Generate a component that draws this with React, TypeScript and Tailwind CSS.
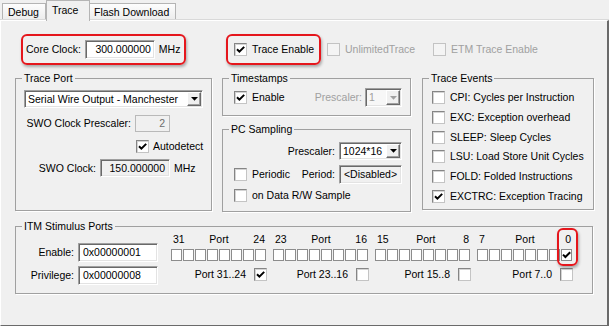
import React from 'react'

const sunken =
  'border border-[#a0a0a0] border-r-white border-b-white shadow-[inset_1px_1px_0_#696969,inset_-1px_-1px_0_#e3e3e3]'
const redBox = 'border-2 border-[#e5161c] rounded-[6px] shadow-[1px_2px_3px_rgba(0,0,0,0.3)]'

function Check({ checked = false, disabled = false }: { checked?: boolean; disabled?: boolean }) {
  return (
    <span
      className={
        disabled
          ? 'flex w-[13px] h-[13px] shrink-0 items-center justify-center border border-[#c3c3c3] bg-[#f4f4f4]'
          : 'flex w-[13px] h-[13px] shrink-0 items-center justify-center border border-[#858585] border-r-[#c4c4c4] border-b-[#c4c4c4] bg-white shadow-[inset_1px_1px_0_#d4d4d4]'
      }
    >
      {checked && (
        <svg width="9" height="9" viewBox="0 0 9 9">
          <path d="M1 4.3 L3.4 6.7 L8.2 1.9" fill="none" stroke="#000" strokeWidth="2" />
        </svg>
      )}
    </span>
  )
}

function Arrow({ gray = false }: { gray?: boolean }) {
  return (
    <svg width="7" height="4" viewBox="0 0 7 4">
      <polygon points="0,0 7,0 3.5,3.8" fill={gray ? '#a0a0a0' : '#000'} />
    </svg>
  )
}

function Combo({ value, className, disabled = false }: { value: string; className: string; disabled?: boolean }) {
  return (
    <div className={`flex ${sunken} ${disabled ? 'bg-[#f7f7f7] text-[#a0a0a0]' : 'bg-white'} ${className}`}>
      <span className="flex-1 flex items-center pl-[3px] whitespace-nowrap overflow-hidden">{value}</span>
      <span className="my-[1px] mr-[1px] w-[14px] flex items-center justify-center bg-[#f0f0f0] border border-white border-r-[#696969] border-b-[#696969] shadow-[inset_-1px_-1px_0_#a0a0a0]">
        <Arrow gray={disabled} />
      </span>
    </div>
  )
}

function Group({ title, className, children }: { title: string; className: string; children?: React.ReactNode }) {
  return (
    <fieldset className={`min-w-0 border border-[#a0a0a0] shadow-[1px_1px_0_#fff] ${className}`}>
      <legend className="ml-[6px] px-[2px] leading-[14px]">{title}</legend>
      {children}
    </fieldset>
  )
}

const events = [
  ['CPI: Cycles per Instruction', false],
  ['EXC: Exception overhead', false],
  ['SLEEP: Sleep Cycles', false],
  ['LSU: Load Store Unit Cycles', false],
  ['FOLD: Folded Instructions', false],
  ['EXCTRC: Exception Tracing', true],
] as const

const ports = [
  { hi: '31', lo: '24', label: 'Port 31..24', on: true },
  { hi: '23', lo: '16', label: 'Port 23..16', on: false },
  { hi: '15', lo: '8', label: 'Port 15..8', on: false },
  { hi: '7', lo: '0', label: 'Port 7..0', on: false },
]

export default function App() {
  return (
    <div className="w-[609px] h-[326px] bg-[#f0f0f0] flex flex-col overflow-hidden font-['Liberation_Sans',sans-serif] text-[10.5px] leading-[13px] text-black">
      {/* tabs */}
      <div className="h-[20px] shrink-0 flex items-end pl-[2px]">
        <div className="w-[44px] h-[17px] border border-b-0 border-[#b4b4b4] bg-gradient-to-b from-[#fdfdfd] to-[#ececec] pl-[5px] pt-[2px]">Debug</div>
        <div className="relative z-10 -mb-px w-[44px] h-[21px] border border-b-0 border-[#b4b4b4] bg-[#f0f0f0] pl-[5px] pt-[3px]">Trace</div>
        <div className="w-[86px] h-[17px] border border-b-0 border-l-0 border-[#b4b4b4] bg-gradient-to-b from-[#fdfdfd] to-[#ececec] pl-[4px] pt-[2px]">Flash Download</div>
      </div>

      {/* page */}
      <div className="flex-1 flex flex-col border-t border-l border-r-2 border-b border-white border-r-[#6a6a6a] border-b-[#6a6a6a] shadow-[0_-1px_0_#d9d9d9]">
        {/* top row */}
        <div className="mt-[13px] h-[31px] flex items-center">
          <div className={`ml-[20px] w-[165px] h-[31px] flex items-center pl-[3px] ${redBox}`}>
            <span>Core Clock:</span>
            <div className={`ml-[4px] w-[70px] h-[19px] flex items-center justify-end pr-[3px] bg-white ${sunken}`}>300.000000</div>
            <span className="ml-[4px]">MHz</span>
          </div>
          <div className={`ml-[40px] w-[95px] h-[31px] flex items-center gap-[5px] pl-[6px] ${redBox}`}>
            <Check checked />
            <span>Trace Enable</span>
          </div>
          <div className="ml-[6px] w-[106px] flex items-center gap-[5px] text-[#a0a0a0]">
            <Check disabled />
            <span>UnlimitedTrace</span>
          </div>
          <div className="flex items-center gap-[5px] text-[#a0a0a0]">
            <Check disabled />
            <span>ETM Trace Enable</span>
          </div>
        </div>

        {/* middle row */}
        <div className="mt-[6px] h-[141px] flex items-start">
          <Group title="Trace Port" className="ml-[14px] w-[197px] h-[140px]">
            <Combo value="Serial Wire Output - Manchester" className="mt-[5px] ml-[8px] w-[179px] h-[18px]" />
            <div className="mt-[7px] h-[17px] flex items-center">
              <span className="w-[115px] text-right">SWO Clock Prescaler:</span>
              <div className="ml-[4px] w-[35px] h-[17px] flex items-center justify-end pr-[4px] bg-[#f0f0f0] border border-[#b9b9b9] text-[#6d6d6d]">2</div>
            </div>
            <div className="mt-[8px] ml-[120px] h-[13px] flex items-center gap-[4px]">
              <Check checked />
              <span>Autodetect</span>
            </div>
            <div className="mt-[6px] h-[18px] flex items-center">
              <span className="w-[80px] text-right">SWO Clock:</span>
              <div className={`ml-[4px] w-[70px] h-[18px] flex items-center justify-end pr-[4px] bg-[#f0f0f0] ${sunken}`}>150.000000</div>
              <span className="ml-[4px]">MHz</span>
            </div>
          </Group>

          <div className="ml-[10px] w-[189px] flex flex-col">
            <Group title="Timestamps" className="w-[189px] h-[45px]">
              <div className="mt-[3px] h-[19px] flex items-center">
                <span className="ml-[11px]"><Check checked /></span>
                <span className="ml-[5px]">Enable</span>
                <span className="ml-auto text-[#a0a0a0]">Prescaler:</span>
                <Combo value="1" disabled className="ml-[3px] mr-[8px] w-[37px] h-[19px]" />
              </div>
            </Group>
            <Group title="PC Sampling" className="mt-[6px] w-[189px] h-[90px]">
              <div className="mt-[6px] h-[18px] flex items-center justify-end pr-[8px] gap-[4px]">
                <span>Prescaler:</span>
                <Combo value="1024*16" className="w-[63px] h-[18px]" />
              </div>
              <div className="mt-[5px] h-[19px] flex items-center">
                <span className="ml-[11px]"><Check /></span>
                <span className="ml-[5px]">Periodic</span>
                <span className="ml-auto">Period:</span>
                <div className={`ml-[4px] mr-[8px] w-[63px] h-[19px] flex items-center justify-center bg-[#f0f0f0] ${sunken}`}>&lt;Disabled&gt;</div>
              </div>
              <div className="mt-[5px] h-[13px] flex items-center">
                <span className="ml-[11px]"><Check /></span>
                <span className="ml-[5px]">on Data R/W Sample</span>
              </div>
            </Group>
          </div>

          <Group title="Trace Events" className="ml-[11px] w-[172px] h-[139px]">
            <div className="mt-[3px] flex flex-col">
              {events.map(([label, on]) => (
                <div key={label} className="h-[19.7px] flex items-center gap-[5px] pl-[9px]">
                  <Check checked={on} />
                  <span className="whitespace-nowrap">{label}</span>
                </div>
              ))}
            </div>
          </Group>
        </div>

        {/* ITM */}
        <Group title="ITM Stimulus Ports" className="mt-[7px] ml-[14px] w-[578px] h-[75px]">
          <div className="flex items-start">
            <div className="mt-[10px] flex flex-col gap-[4px]">
              <div className="h-[19px] flex items-center">
                <span className="w-[58px] text-right">Enable:</span>
                <div className={`ml-[4px] w-[80px] h-[19px] flex items-center pl-[4px] bg-white ${sunken}`}>0x00000001</div>
              </div>
              <div className="h-[19px] flex items-center">
                <span className="w-[58px] text-right">Privilege:</span>
                <div className={`ml-[4px] w-[80px] h-[19px] flex items-center pl-[4px] bg-white ${sunken}`}>0x00000008</div>
              </div>
            </div>
            <div className="ml-[13px] flex gap-[6px]">
              {ports.map((p, gi) => (
                <div key={p.label} className="relative w-[96px] flex flex-col">
                  <div className="h-[13px] flex justify-between px-[2px]">
                    <span>{p.hi}</span>
                    <span>Port</span>
                    <span>{p.lo}</span>
                  </div>
                  <div className="mt-[3px] h-[12px] flex gap-[1px]">
                    {Array.from({ length: 8 }).map((_, i) => (
                      <span key={i} className="w-[11px] h-[12px] flex items-center justify-center border border-[#8c8c8c] bg-white">
                        {gi === 3 && i === 7 && (
                          <svg width="9" height="8" viewBox="0 0 9 8">
                            <path d="M1 3.6 L3.4 6 L8.2 1.2" fill="none" stroke="#000" strokeWidth="2" />
                          </svg>
                        )}
                      </span>
                    ))}
                  </div>
                  <div className="mt-[7px] h-[13px] flex items-center justify-end gap-[8px]">
                    <span>{p.label}</span>
                    <Check checked={p.on} />
                  </div>
                  {gi === 3 && <div className={`absolute left-[80px] top-[-5px] w-[21px] h-[38px] ${redBox}`} />}
                </div>
              ))}
            </div>
          </div>
        </Group>
      </div>
    </div>
  )
}
